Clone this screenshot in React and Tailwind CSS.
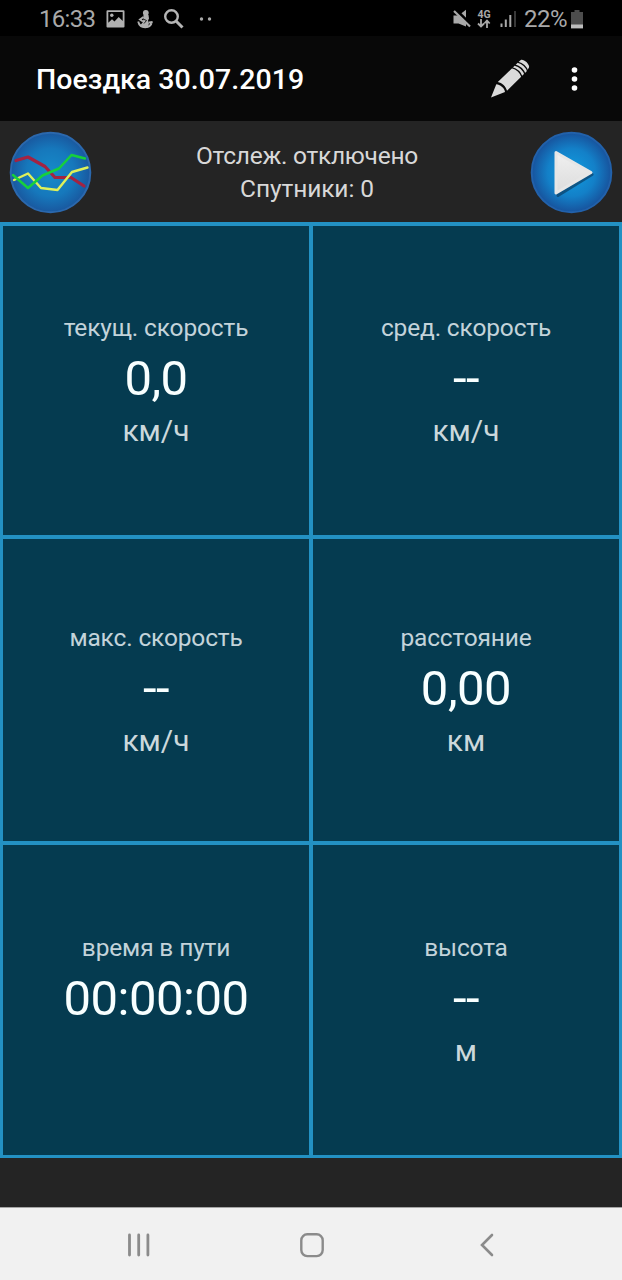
const cells = [
  { label: 'текущ. скорость', value: '0,0', unit: 'км/ч' },
  { label: 'сред. скорость', value: '--', unit: 'км/ч' },
  { label: 'макс. скорость', value: '--', unit: 'км/ч' },
  { label: 'расстояние', value: '0,00', unit: 'км' },
  { label: 'время в пути', value: '00:00:00', unit: '' },
  { label: 'высота', value: '--', unit: 'м' },
];

function StatusBar() {
  return (
    <div className="flex h-9 items-center bg-black pt-[2px] pl-[39px] text-[#a9a9a9]">
      <span className="w-[67px] text-[24px] leading-9 tracking-[-0.7px] whitespace-nowrap">16:33</span>
      <svg className="h-[18px] w-[20px]" viewBox="0 0 20 18">
        <path fill="#b0b0b0" fillRule="evenodd" d="M1.500.3h16a1 1 0 0 1 1 1v15.200a1 1 0 0 1-1 1h-16a1 1 0 0 1-1-1V1.300a1 1 0 0 1 1-1zM2.300 2.100v10.700l3.700-3.600 2.500 2.300 4.200-4.500 4 4V2.100z" />
        <circle cx="5.800" cy="5.300" r="1.700" fill="#b0b0b0" />
      </svg>
      <svg className="ml-[11px] h-[20px] w-[17px]" viewBox="0 0 17 20">
        <circle cx="8.800" cy="3.800" r="2.900" fill="#b0b0b0" />
        <path d="M6.500 6h5l.5 3.500-1 2 1 2.500-1 4.500H6L3.500 16 6 13z" fill="#b0b0b0" />
        <path d="M1.200 12.500c1 4.500 4 5.700 7 5.700s6-1.700 6.800-5.700M6.500 8L3 10.500l3 2M15.500 13l-3.500.5" fill="none" stroke="#b0b0b0" strokeWidth="1.900" />
        <path d="M6 10l3.500 1.500L7 14.500" fill="none" stroke="#111" strokeWidth=".9" />
      </svg>
      <svg className="ml-[9px] h-[22px] w-[22px]" viewBox="0 0 22 22" fill="none" stroke="#b5b5b5">
        <circle cx="8.500" cy="8.500" r="6.300" strokeWidth="2.400" />
        <path d="M13 13l6.500 6.500" strokeWidth="3" />
      </svg>
      <svg className="ml-[14px] h-[4px] w-[14px]" viewBox="0 0 14 4" fill="#a9a9a9">
        <circle cx="2.500" cy="2" r="1.700" />
        <circle cx="10.500" cy="2" r="1.700" />
      </svg>
      <svg className="ml-[240px] h-[20px] w-[18px]" viewBox="0 0 18 20">
        <path d="M.5 6.500h5L13 .8v16.700l-7.500-3H.5z" fill="#a9a9a9" />
        <path d="M3 1l15.500 15" stroke="#000" strokeWidth="3" />
        <path d="M1 2l16 15.500" stroke="#a9a9a9" strokeWidth="2.200" />
      </svg>
      <div className="ml-[3px] flex w-[20px] flex-col items-center">
        <span className="text-[10.5px] leading-[9px] font-bold">4G</span>
        <svg className="h-[9px] w-[14px]" viewBox="0 0 14 9" fill="none" stroke="#a9a9a9" strokeWidth="1.800">
          <path d="M4 0v7M1 4.500l3 3 3-3M10 9V2M7.300 4.500l2.700-3 2.700 3" />
        </svg>
      </div>
      <svg className="ml-[6px] h-[18px] w-[18px]" viewBox="0 0 18 18">
        <path d="M1.500 13.500V17M5.800 9.500V17M10.300 5V17" stroke="#a9a9a9" strokeWidth="2" />
        <path d="M15 1v16" stroke="#383838" strokeWidth="2" />
      </svg>
      <span className="ml-[6px] w-[47px] text-[24px] leading-9 tracking-[-0.5px] whitespace-nowrap">22%</span>
      <svg className="h-[19px] w-[13px]" viewBox="0 0 13 19">
        <path d="M3.500 0h5v2H12v17H0V2h3.500z" fill="#4c4c4c" />
        <path d="M0 14.500h12V18H0z" fill="#bdbdbd" />
      </svg>
    </div>
  );
}

function TitleBar() {
  return (
    <div className="flex h-[85px] items-center bg-[#080808] pl-[36px]">
      <h1 className="w-[454px] pt-[3px] text-[28.5px] leading-[40px] font-medium tracking-[0.05px] whitespace-nowrap text-white">Поездка 30.07.2019</h1>
      <svg className="h-[42px] w-[42px]" viewBox="0 0 42 42">
        <path d="M1 39.500L6.300 26.300C10 26.500 14.500 30 15 34z" fill="#dadada" />
        <path d="M7.800 24L28.500 4l2.300-2c2.500-1.500 9.200 4 8.200 7.500l-2.500 4L17 32.800C16 28.500 12 24.800 7.800 24z" fill="#dadada" />
        <path d="M21.800 9.700c4.700 1.300 8.700 4.800 10.200 9.300M24.700 7c4.700 1.300 8.700 4.800 10.200 9.300M27.600 4.200c4.700 1.300 8.700 4.800 10.200 9.300" fill="none" stroke="#080808" strokeWidth="1.400" />
      </svg>
      <svg className="ml-[36px] h-[26px] w-[14px]" viewBox="0 0 14 26" fill="white">
        <circle cx="6.500" cy="4" r="2.800" />
        <circle cx="6.500" cy="13" r="2.800" />
        <circle cx="6.500" cy="22" r="2.800" />
      </svg>
    </div>
  );
}

function ChartButton() {
  return (
    <svg className="h-[83px] w-[83px]" viewBox="0 0 83 83">
      <defs>
        <radialGradient id="disc">
          <stop offset="0" stopColor="#168bc9" />
          <stop offset=".6" stopColor="#1678bc" />
          <stop offset="1" stopColor="#19589f" />
        </radialGradient>
      </defs>
      <circle cx="41.500" cy="41.500" r="39.800" fill="url(#disc)" stroke="#2b68ad" strokeWidth="2" />
      <g fill="none" strokeLinejoin="round" strokeLinecap="round">
        <path d="M7 29.500L19 26l17 9.500L46 46.500h16L75 55" stroke="#a32342" strokeWidth="3.200" />
        <path d="M5 49l14-6.500L32 57l16.500 2L63 41l15.500-4.500" stroke="#dff05a" strokeWidth="2.400" />
        <path d="M4 44l15 13 14.500-12.500L50 37.500 62.500 24 76 27.500" stroke="#16d03c" strokeWidth="2.500" />
      </g>
    </svg>
  );
}

function PlayButton() {
  return (
    <svg className="h-[83px] w-[83px]" viewBox="0 0 83 83">
      <defs>
        <radialGradient id="play-disc">
          <stop offset="0" stopColor="#109de0" />
          <stop offset=".6" stopColor="#1380c8" />
          <stop offset="1" stopColor="#17539d" />
        </radialGradient>
        <linearGradient id="play-face" x2="0" y2="1">
          <stop stopColor="#f0f0f0" />
          <stop offset="1" stopColor="#dcdcdc" />
        </linearGradient>
      </defs>
      <circle cx="41.500" cy="41.500" r="39.800" fill="url(#play-disc)" stroke="#2261aa" strokeWidth="2" />
      <path d="M27 23l35 20.500-34 21z" fill="#0b3f66" stroke="#0b3f66" strokeWidth="3" strokeLinejoin="round" opacity=".7" />
      <path d="M26 21.500L61 41.500 26 62z" fill="url(#play-face)" stroke="#e6e6e6" strokeWidth="3" strokeLinejoin="round" />
    </svg>
  );
}

function Metric({ label, value, unit }) {
  return (
    <div className="flex flex-col items-center bg-[#053b50] whitespace-nowrap">
      <span className="text-[24.5px] leading-[30px] tracking-[-0.15px] text-[#c3d3da]">{label}</span>
      <span className="mt-[6px] text-[49px] leading-[60px] tracking-[-0.5px] text-[#f8ffff]">{value}</span>
      <span className="mt-1 text-[30px] leading-[36px] text-[#ccd8dc]">{unit}</span>
    </div>
  );
}

export default function App() {
  return (
    <div className="flex h-[1280px] w-[622px] flex-col overflow-hidden bg-[#242424] font-['Roboto',sans-serif]">
      <StatusBar />
      <TitleBar />
      <div className="flex h-[101px] items-center justify-between pt-[1px] pr-[9px] pl-[9px]">
        <ChartButton />
        <div className="pr-[8px] text-center text-[24.5px] leading-[33px] text-[#d8d8d8]">
          <p className="tracking-[-0.25px]">Отслеж. отключено</p>
          <p className="tracking-[-0.1px]">Спутники: 0</p>
        </div>
        <PlayButton />
      </div>
      <div className="grid h-[936px] grid-cols-[306px_306px] grid-rows-[309px_302px_310px] gap-1 bg-[#2391c3] px-[3px] pt-1 pb-[3px] *:nth-1:pt-[87px] *:nth-2:pt-[87px] *:nth-3:pt-[84px] *:nth-4:pt-[84px] *:nth-5:pt-[88px] *:nth-6:pt-[88px]">
        {cells.map((cell) => (
          <Metric key={cell.label} {...cell} />
        ))}
      </div>
      <div className="h-[49px]" />
      <div className="flex h-[73px] items-center border-t border-[#a5a5a5] bg-[#f1f1f1] pt-[2px] pl-[127px]">
        <svg className="h-6 w-[24px]" viewBox="0 0 24 24" stroke="#8b8b8b" strokeWidth="2.800" strokeLinecap="round">
          <path d="M2.500 2v20M11.700 2v20M20.900 2v20" />
        </svg>
        <svg className="ml-[148px] h-[26px] w-[26px]" viewBox="0 0 26 26">
          <rect x="2.300" y="2.300" width="21.400" height="21.800" rx="6" fill="none" stroke="#8b8b8b" strokeWidth="2.400" />
        </svg>
        <svg className="ml-[154px] h-6 w-4" viewBox="0 0 16 24" fill="none" stroke="#8b8b8b" strokeWidth="2.600" strokeLinecap="round">
          <path d="M13 2L3 12l10 10" />
        </svg>
      </div>
    </div>
  );
}
